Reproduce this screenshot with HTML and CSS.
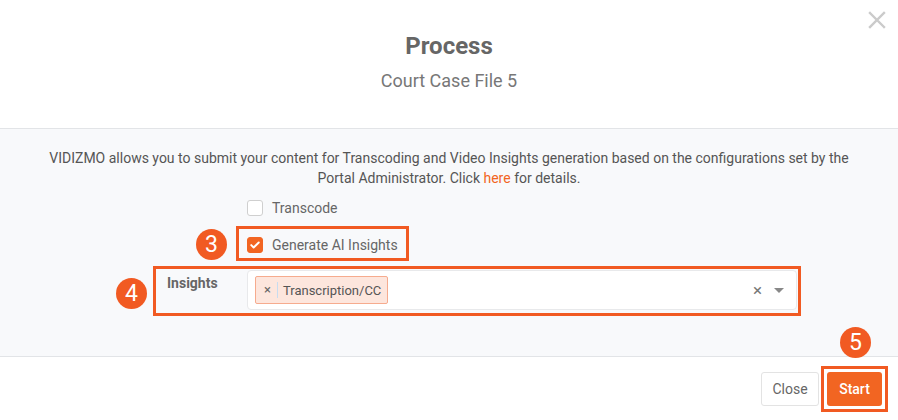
FILE: index.html
```html
<!DOCTYPE html>
<html lang="en">
<head>
  <meta charset="UTF-8">
  <title>Process - Court Case File 5</title>
  <link rel="stylesheet" href="styles.css">
</head>
<body>
  <div class="modal">
    <!-- Header -->
    <div class="modal-header">
      <h1>Process</h1>
      <h2>Court Case File 5</h2>
      <span class="close-x">
        <svg viewBox="0 0 18 18" width="18" height="18"><path d="M2 2l14 14M16 2L2 16" stroke="#cbcbcb" stroke-width="2.4" stroke-linecap="square"/></svg>
      </span>
    </div>

    <!-- Body -->
    <div class="modal-body">
      <p class="intro">VIDIZMO allows you to submit your content for Transcoding and Video Insights generation based on the configurations set by the Portal Administrator. Click <a href="#">here</a> for details.</p>

      <div class="options">
        <label class="check-row">
          <span class="checkbox"></span>
          Transcode
        </label>

        <div class="marked marked-check">
          <span class="step step-3">3</span>
          <label class="check-row">
            <span class="checkbox checked">
              <svg viewBox="0 0 16 16" width="12" height="12"><path d="M3 8.2l3.2 3.1L13 4.6" fill="none" stroke="#fff" stroke-width="2.6" stroke-linecap="round" stroke-linejoin="round"/></svg>
            </span>
            Generate AI Insights
          </label>
        </div>
      </div>

      <div class="marked marked-row">
        <span class="step step-4">4</span>
        <div class="form-row">
          <span class="row-label">Insights</span>
          <div class="select">
            <span class="tag"><span class="tag-x">&times;</span><span class="tag-text">Transcription/CC</span></span>
            <span class="select-clear">&times;</span>
            <span class="select-caret"></span>
          </div>
        </div>
      </div>
    </div>

    <!-- Footer -->
    <div class="modal-footer">
      <button class="btn btn-close">Close</button>
      <div class="marked marked-btn">
        <span class="step step-5">5</span>
        <button class="btn btn-start">Start</button>
      </div>
    </div>
  </div>
</body>
</html>
```

FILE: styles.css
```css
/* Page */
body {
  margin: 0;
  font-family: Roboto, 'Liberation Sans', Arial, sans-serif;
  color: #555;
  background: #fff;
}

.modal {
  width: 898px;
  height: 420px;
  display: flex;
  flex-direction: column;
}

/* Header */
.modal-header {
  position: relative;
  height: 129px;
  flex-shrink: 0;
  border-bottom: 1px solid #e2e4e7;
  text-align: center;
  box-sizing: border-box;
  padding-top: 31px;
}

h1 {
  margin: 0;
  font-size: 24px;
  font-weight: 700;
  color: #666;
  line-height: 30px;
}

h2 {
  margin: 8px 0 0;
  font-size: 18px;
  font-weight: 400;
  color: #777;
  line-height: 24px;
}

.close-x {
  position: absolute;
  top: 11px;
  right: 12px;
  width: 18px;
  height: 18px;
}

.close-x svg {
  display: block;
}

/* Body */
.modal-body {
  background: #f8f9fb;
  height: 228px;
  flex-shrink: 0;
  border-bottom: 1px solid #e2e4e7;
  box-sizing: border-box;
  padding-top: 19px;
}

.intro {
  margin: 0 auto;
  width: 830px;
  text-align: center;
  font-size: 14px;
  line-height: 20px;
  color: #555;
}

.intro a {
  color: #f26522;
  text-decoration: none;
}

.options {
  margin-top: 10px;
  padding-left: 236px;
}

.check-row {
  display: flex;
  align-items: center;
  gap: 9px;
  font-size: 14px;
  color: #666;
  height: 20px;
}

.options > .check-row {
  padding-left: 11px;
}

.checkbox {
  width: 14px;
  height: 14px;
  border: 1px solid #cfcfcf;
  border-radius: 3px;
  background: #fff;
  display: flex;
  align-items: center;
  justify-content: center;
}

.checkbox.checked {
  background: #f26522;
  border-color: #f26522;
}

/* Annotation frames */
.marked {
  position: relative;
  border: 3px solid #f15a22;
  box-sizing: border-box;
}

.marked-check {
  margin-top: 8px;
  width: 173px;
  height: 35px;
  padding: 6px 0 0 8px;
}

.marked-row {
  margin: 5px 0 0 153px;
  width: 648px;
  height: 50px;
}

.marked-btn {
  margin-left: 2px;
  padding: 3px;
  width: 67px;
  height: 46px;
}

.step {
  position: absolute;
  width: 31px;
  height: 31px;
  border-radius: 50%;
  background: #f15a22;
  color: #fff;
  font-size: 23px;
  line-height: 31px;
  text-align: center;
}

.step-3 { left: -43px; top: 0; }
.step-4 { left: -40px; top: 9px; }
.step-5 { left: 16px; top: -42px; }

/* Insights row */
.form-row {
  display: flex;
  padding: 1px 1px 0 11px;
}

.row-label {
  width: 80px;
  font-size: 14px;
  font-weight: 700;
  color: #666;
  padding-top: 5px;
}

.select {
  flex: 1;
  height: 40px;
  box-sizing: border-box;
  background: #fff;
  border: 1px solid #e8e9eb;
  border-radius: 4px;
  display: flex;
  align-items: center;
  padding: 0 12px 0 7px;
}

.tag {
  display: flex;
  align-items: center;
  height: 28px;
  box-sizing: border-box;
  background: #fde6dd;
  border: 1px solid #f6ab8e;
  border-radius: 2px;
  font-size: 13px;
  color: #555;
}

.tag-x {
  padding: 0 6px 0 8px;
  border-right: 1px solid #c7dcf0;
  line-height: 16px;
  color: #666;
}

.tag-text {
  padding: 0 6px 0 5px;
}

.select-clear {
  margin-left: auto;
  font-size: 17px;
  color: #777;
}

.select-caret {
  margin-left: 12px;
  width: 0;
  height: 0;
  border-left: 5px solid transparent;
  border-right: 5px solid transparent;
  border-top: 5px solid #888;
}

/* Footer */
.modal-footer {
  flex: 1;
  display: flex;
  justify-content: flex-end;
  align-items: flex-start;
  padding: 9px 10px 0 0;
}

.btn {
  font-family: inherit;
  font-size: 14px;
  height: 34px;
  border-radius: 3px;
  cursor: pointer;
}

.btn-close {
  margin-top: 6px;
  width: 58px;
  background: #fff;
  border: 1px solid #e3e3e3;
  color: #666;
}

.btn-start {
  width: 55px;
  background: #f26522;
  border: none;
  color: #fff;
  font-weight: 500;
}
```
